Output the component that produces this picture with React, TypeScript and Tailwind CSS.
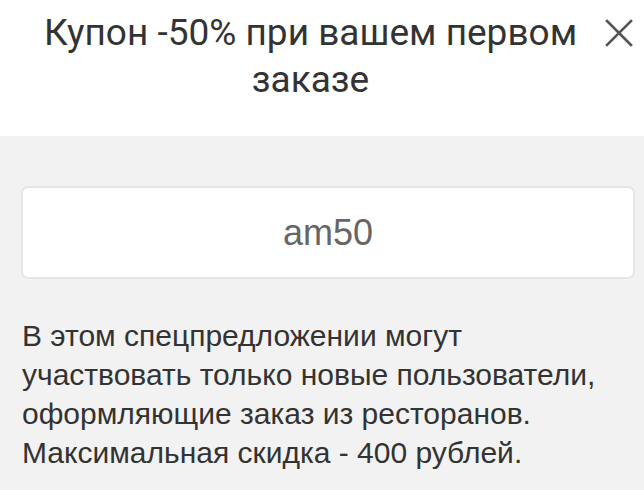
import React from 'react';

const CloseIcon: React.FC = () => (
    <svg viewBox="0 0 30 30" className="w-[30px] h-[30px]" fill="none" stroke="#555" strokeWidth="2.6" strokeLinecap="square">
        <path d="M3 3 L27 27 M27 3 L3 27" />
    </svg>
);

const App: React.FC = () => {
    return (
        <div className="w-[644px] h-[490px] flex flex-col bg-[#f2f2f2] overflow-hidden">
            <div className="bg-white h-[136px] flex items-start pt-[9px] pl-[21px] pr-[10px]">
                <h1 className="flex-1 text-center text-[37px] leading-[47px] text-[#333] font-['Roboto',sans-serif] font-normal">
                    Купон -50% при вашем первом заказе
                </h1>
                <button className="mt-[9px] ml-[4px] shrink-0">
                    <CloseIcon />
                </button>
            </div>

            <div className="pt-[50px] pl-[21px] pr-[9px] font-['Liberation_Sans',Arial,sans-serif]">
                <div className="h-[93px] bg-white rounded-[7px] border-2 border-[#e6e6e6] flex items-center justify-center">
                    <span className="text-[36px] text-[#666]">am50</span>
                </div>

                <p className="mt-[37px] pl-[1px] pr-[18px] text-[30px] leading-[39px] text-[#333]">
                    В этом спецпредложении могут участвовать только новые пользователи, оформляющие заказ из ресторанов. Максимальная скидка - 400 рублей.
                </p>
            </div>
        </div>
    );
};

export default App;
